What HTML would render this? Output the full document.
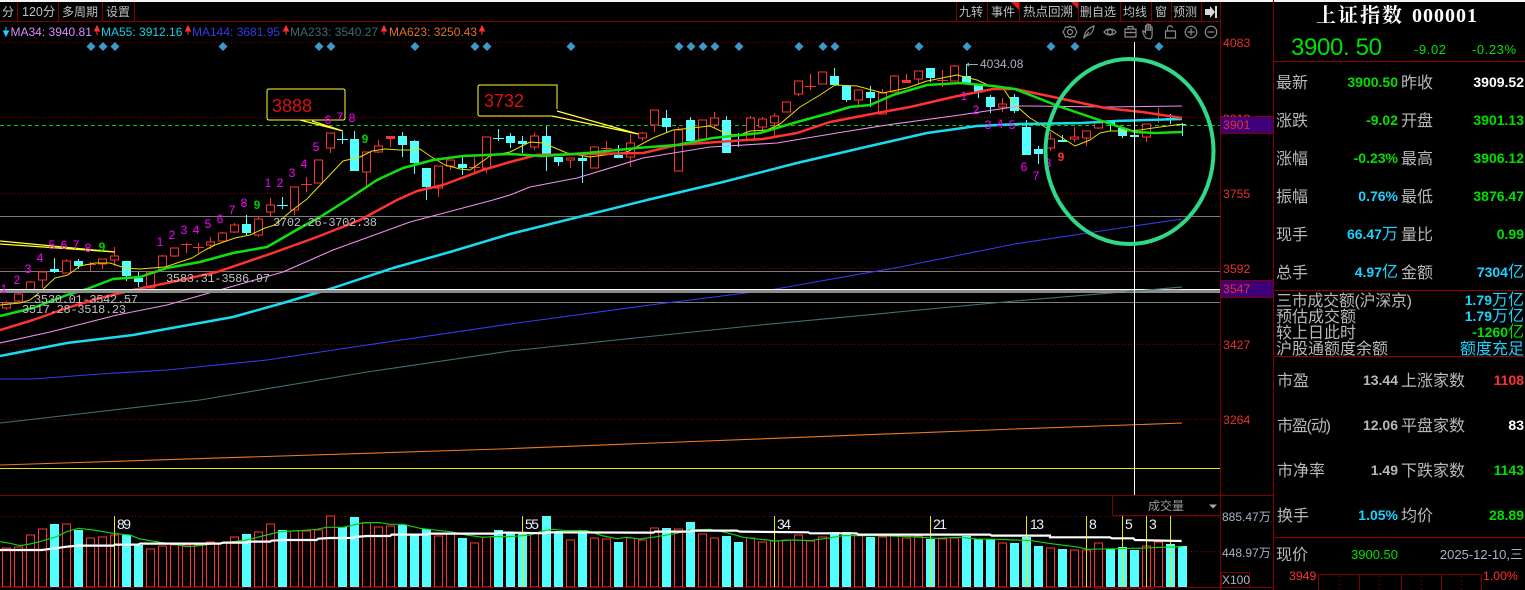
<!DOCTYPE html>
<html><head><meta charset="utf-8"><title>上证指数 000001</title>
<style>
html,body{margin:0;padding:0;background:#000;width:1525px;height:590px;overflow:hidden}
svg{display:block;position:absolute;left:0;top:0}
text{font-family:"Liberation Sans","WenQuanYi Zen Hei","Noto Sans CJK SC",sans-serif;white-space:pre}
.tb{font-size:12px;fill:#c0c0c0}
.lab{font-size:16px;fill:#b8b8b8}
.v{font-size:14px;font-weight:bold;text-anchor:end}
.v tspan{font-size:16px;font-weight:normal}
.g{fill:#00e000}.c{fill:#19d4ff}.w{fill:#fff}.gr{fill:#b8b8b8}.r{fill:#ff3030}
.ax{font-size:12.3px;fill:#e83030}
.n{font-size:12px;fill:#f0f}
.pr{font-family:"Liberation Mono",monospace;font-size:12px;fill:#c0c0c0}
.vn{font-size:14px;fill:#e8f0ff}
.ma{font-size:12px}
.ic{fill:none;stroke:#8a8a8a;stroke-width:1.2}
.d{fill:#3a9ac8}
</style></head><body>
<svg width="1525" height="590" viewBox="0 0 1525 590" xmlns="http://www.w3.org/2000/svg">
<rect width="1525" height="590" fill="#000"/>
<rect width="1525" height="2" fill="#f4f4f4"/>

<!-- toolbar -->
<g stroke="#800000" stroke-width="1" shape-rendering="crispEdges">
<path d="M0 21.5H1220M17.5 2V21M58.5 2V21M102.5 2V21M134.5 2V21M956.5 2V21M987.5 2V21M1019.5 2V21M1078.5 2V21M1120.5 2V21M1151.5 2V21M1171.5 2V21M1201.5 2V21"/>
</g>
<path d="M1011 2h8v8zM1071 2h7v7z" fill="#e02020"/>
<g class="tb">
<text class="tb" x="2" y="16">分</text>
<text class="tb" x="22" y="16" style="font-size:12.5px">120分</text>
<text class="tb" x="62" y="16">多周期</text>
<text class="tb" x="106" y="16">设置</text>
<text class="tb" x="959" y="16">九转</text>
<text class="tb" x="991" y="16">事件</text>
<text class="tb" x="1023" y="16" style="font-size:12.5px">热点回溯</text>
<text class="tb" x="1080" y="16">删自选</text>
<text class="tb" x="1123" y="16">均线</text>
<text class="tb" x="1155" y="16">窗</text>
<text class="tb" x="1173" y="16">预测</text>
</g>
<path d="M1205 9h5V6l5 6-5 6v-3h-5z" fill="#d8d8d8"/><rect x="1215" y="6" width="2" height="12" fill="#d8d8d8"/>

<!-- MA legend -->
<path d="M6 27v6M3.5 31L6 36 8.500 31z" stroke="#19d4ff" fill="#19d4ff"/>
<text class="ma" x="10.500" y="36" fill="#d88cff">MA34: 3940.81</text>
<path d="M97 35v-6M94.500 31L97 26 99.500 31z" stroke="#ff3030" fill="#ff3030"/>
<text class="ma" x="101" y="36" fill="#16d0e0">MA55: 3912.16</text>
<path d="M188 35v-6M185.500 31L188 26 190.500 31z" stroke="#ff3030" fill="#ff3030"/>
<text class="ma" x="192" y="36" fill="#3838e8">MA144: 3681.95</text>
<path d="M286 35v-6M283.500 31L286 26 288.500 31z" stroke="#ff3030" fill="#ff3030"/>
<text class="ma" x="290" y="36" fill="#3c6a70">MA233: 3540.27</text>
<path d="M384 35v-6M381.500 31L384 26 386.500 31z" stroke="#ff3030" fill="#ff3030"/>
<text class="ma" x="389" y="36" fill="#e07020">MA623: 3250.43</text>
<path d="M482 35v-6M479.500 31L482 26 484.500 31z" stroke="#ff3030" fill="#ff3030"/>

<!-- tool icons -->
<g class="ic">
<circle cx="1070" cy="32" r="2.500"/><path d="M1070 26l2 1.500 2.500-.5 1 2.500 1.500 2.500-1.500 2.500-1 2.500-2.500-.5-2 1.500-2-1.500-2.500.5-1-2.500-1.500-2.500 1.500-2.500 1-2.500 2.500.5z"/>
<path d="M1084 38c0-5 4-10 10-12-.5 5-3 9-8 10zM1084 38l5-6"/>
<path d="M1104 32c3-4 9-4 12 0-3 4-9 4-12 0z"/><circle cx="1110" cy="32" r="2.500"/>
<path d="M1125 29h11v8h-11zM1128 29v-2.500h5V29M1125 32.500h11M1130.500 31.500v2"/>
<path d="M1146 38c-2-2-3-5-3.500-7 .8-.8 1.800 0 3 2v-7c.8-1 1.500 0 1.500 0v5-6.500c.8-1 1.800 0 1.800 0v6.500-6c.8-1 1.700 0 1.700 0v6-4c.8-.8 1.600 0 1.600 0v8c0 2-.6 3-1.500 4z"/>
<path d="M1165.500 31h10v7h-10zM1167.500 31v-3c0-3 5-3 5 0"/>
<circle cx="1191" cy="32" r="5.800"/><path d="M1187.500 32h7M1191 28.500v7"/>
<circle cx="1211" cy="32" r="5.800"/><path d="M1207.500 32h7"/>
</g>

<!-- grid -->
<g stroke="#800000" stroke-width="1" stroke-dasharray="1 2" shape-rendering="crispEdges" fill="none">
<path d="M0 42.500H1220M0 117.500H1220M0 193.500H1220M0 268.500H1220M0 344.500H1220M0 419.500H1220M0 516.500H1220M0 551.500H1220"/>
</g>
<path d="M0 125.500H1221" stroke="#10c010" stroke-dasharray="4 3" shape-rendering="crispEdges"/>
<path d="M0 216.500H1220M0 271.500H1220M0 302.500H1220" stroke="#7c7c7c" shape-rendering="crispEdges"/>

<!-- diamonds -->
<g class="d">
<path d="M91 42l4.500 4.500L91 51l-4.500-4.500zM103 42l4.500 4.500L103 51l-4.500-4.500zM115 42l4.500 4.500L115 51l-4.500-4.500zM223 42l4.500 4.500L223 51l-4.500-4.500zM319 42l4.500 4.500L319 51l-4.500-4.500zM331 42l4.500 4.500L331 51l-4.500-4.500zM415 42l4.500 4.500L415 51l-4.500-4.500zM475 42l4.500 4.500L475 51l-4.500-4.500zM487 42l4.500 4.500L487 51l-4.500-4.500zM571 42l4.500 4.500L571 51l-4.500-4.500zM679 42l4.500 4.500L679 51l-4.500-4.500zM691 42l4.500 4.500L691 51l-4.500-4.500zM703 42l4.500 4.500L703 51l-4.500-4.500zM715 42l4.500 4.500L715 51l-4.500-4.500zM739 42l4.500 4.500L739 51l-4.500-4.500zM799 42l4.500 4.500L799 51l-4.500-4.500zM823 42l4.500 4.500L823 51l-4.500-4.500zM835 42l4.500 4.500L835 51l-4.500-4.500zM919 42l4.500 4.500L919 51l-4.500-4.500zM967 42l4.500 4.500L967 51l-4.500-4.500zM1051 42l4.500 4.500L1051 51l-4.500-4.500zM1075 42l4.500 4.500L1075 51l-4.500-4.500zM1159 42l4.500 4.500L1159 51l-4.500-4.500z"/>
</g>

<!-- red wicks + crosses -->
<path shape-rendering="crispEdges" stroke="#ff3232" fill="none" d="M6.500 301V310M18.500 293V303M30.500 281V291M42.500 271V288M66.500 259V273M90.500 262V271M85 264.500H96M102.500 259V269M114.500 247V266M150.500 271V288M162.500 255V270M174.500 248V257M186.500 243V253M181 244.500H192M198.500 243V253M193 247.500H204M210.500 237V249M222.500 232V241M234.500 223V233M258.500 216V237M270.500 198V217M294.500 187V215M306.500 177V192M301 184.500H312M318.500 160V183M330.500 133V153M366.500 152V187M378.500 140V153M390.500 136V147M474.500 157V173M469 167.500H480M438.500 166V197M450.500 160V170M486.500 137V173M534.500 133V150M570.500 158V168M594.500 147V168M606.500 141V153M601 148.500H612M630.500 134V167M642.500 132V141M654.500 110V132M678.500 127V171M702.500 120V139M714.500 112V128M750.500 116V139M762.500 117V132M774.500 113V136M786.500 102V112M798.500 81V96M810.500 74V90M805 86.500H816M822.500 72V84M858.500 90V106M882.500 89V114M894.500 75V92M906.500 74V81M918.500 71V84M942.500 70V87M937 80.500H948M954.500 65V81M1002.500 98V112M1050.500 132V151M1074.500 127V142M1086.500 131V146M1098.500 120V129M1146.500 124V142M1158.500 108V123M1153 119.500H1164"/>
<path fill="#ff3232" shape-rendering="crispEdges" d="M386 136h9v3h-9zM902 80h9v3h-9z"/>
<!-- red bodies -->
<path shape-rendering="crispEdges" stroke="#ff3232" fill="#000" d="M2.500 303h8v5h-8zM14.500 294h8v7h-8zM26.500 282h8v8h-8zM38.500 272h8v8h-8zM62.500 261h8v12h-8zM98.500 259h8v5h-8zM110.500 256h8v4h-8zM146.500 272h8v16h-8zM158.500 256h8v13h-8zM170.500 248h8v8h-8zM206.500 242h8v3h-8zM218.500 233h8v8h-8zM230.500 225h8v7h-8zM254.500 219h8v16h-8zM266.500 205h8v7h-8zM290.500 187h8v23h-8zM314.500 160h8v23h-8zM326.500 133h8v15h-8zM362.500 152h8v20h-8zM374.500 146h8v6h-8zM434.500 166h8v22h-8zM446.500 160h8v6h-8zM482.500 137h8v31h-8zM530.500 136h8v11h-8zM566.500 158h8v2h-8zM590.500 147h8v21h-8zM626.500 143h8v14h-8zM638.500 133h8v5h-8zM650.500 110h8v15h-8zM674.500 130h8v41h-8zM698.500 120h8v19h-8zM710.500 118h8v7h-8zM746.500 118h8v21h-8zM758.500 119h8v8h-8zM770.500 116h8v7h-8zM782.500 102h8v10h-8zM794.500 81h8v13h-8zM818.500 72h8v12h-8zM854.500 90h8v10h-8zM878.500 93h8v21h-8zM890.500 76h8v16h-8zM914.500 71h8v8h-8zM950.500 66h8v15h-8zM998.500 104h8v3h-8zM1046.500 139h8v9h-8zM1070.500 137h8v2h-8zM1082.500 131h8v7h-8zM1094.500 123h8v5h-8zM1142.500 124h8v13h-8z"/>
<!-- cyan wicks -->
<path shape-rendering="crispEdges" stroke="#54ffff" fill="none" d="M54.500 258V273M78.500 259V269M126.500 261V281M138.500 272V287M246.500 215V235M282.500 197V209M277 205.500H288M342.500 132V144M337 139.500H348M354.500 131V171M402.500 132V157M414.500 140V174M426.500 168V200M462.500 157V175M498.500 129V141M493 138.500H504M510.500 133V148M522.500 136V153M546.500 126V171M558.500 157V166M582.500 155V183M618.500 145V158M666.500 110V132M690.500 117V143M726.500 116V153M738.500 133V147M834.500 68V85M846.500 86V102M870.500 86V107M930.500 68V82M966.500 64V83M978.500 85V98M990.500 95V113M1014.500 94V113M1026.500 120V155M1038.500 146V164M1062.500 135V142M1110.500 120V131M1122.500 128V138M1134.500 135V143M1170.500 114V124M1182.500 123V136M1177 124.500H1186"/>
<!-- cyan bodies -->
<path shape-rendering="crispEdges" fill="#54ffff" d="M50 269h9v3h-9zM74 261h9v5h-9zM122 261h9v15h-9zM134 278h9v4h-9zM242 224h9v9h-9zM350 139h9v32h-9zM398 136h9v9h-9zM410 141h9v22h-9zM422 168h9v19h-9zM458 164h9v4h-9zM506 136h9v7h-9zM518 141h9v3h-9zM542 136h9v18h-9zM554 157h9v5h-9zM578 158h9v3h-9zM614 155h9v3h-9zM662 118h9v9h-9zM686 120h9v21h-9zM722 120h9v33h-9zM734 134h9v2h-9zM830 76h9v9h-9zM842 86h9v14h-9zM866 92h9v6h-9zM926 68h9v10h-9zM962 76h9v7h-9zM974 85h9v7h-9zM986 97h9v10h-9zM1010 97h9v14h-9zM1022 127h9v28h-9zM1034 149h9v5h-9zM1058 140h9v2h-9zM1106 122h9v2h-9zM1118 128h9v8h-9zM1130 135h9v2h-9zM1166 118h9v2h-9z"/>

<!-- MAs -->
<g fill="none" stroke-linejoin="round">
<polyline stroke="#e8e000" stroke-width="1" points="0,305 20,303 30,300 40,292 55,278 68,275 80,266 95,263 110,263 125,268 140,269 152,268 165,267 180,262 192,258 205,250 215,245 235,238 250,235 265,228 275,225 290,212 307,199 343,161 360,157 372,151 385,149 400,150 414,150 420,149 430,156 445,165 460,169 470,170 490,156 500,154 510,152 530,142 543,143 567,153 590,157 627,152 653,138 673,130 710,126 723,132 737,136 750,131 767,130 780,124 800,107 820,95 835,85 857,86 883,93 907,88 927,81 957,75 977,80 990,86 1003,88 1013,103 1030,118 1050,130 1075,146 1090,140 1100,133 1110,131 1125,131 1140,130 1160,127 1183,124"/>
<polyline stroke="#f090f0" stroke-width="1.100" points="0,343 50,332 117,315 167,305 223,289 283,272 333,250 410,222 493,200 510,195 530,187 577,178 643,158 710,147 777,143 843,132 887,125 960,115 1020,106 1032,106 1105,107 1182,106"/>
<polyline stroke="#3838f0" stroke-width="1.100" points="0,379 33,379 100,374 167,370 267,360 367,345 510,324 650,305 770,290 900,267 1015,244 1134,226 1182,219"/>
<polyline stroke="#3c7074" stroke-width="1.100" points="0,423 200,400 367,372 510,351 760,325 1015,301 1182,287"/>
<polyline stroke="#f07820" stroke-width="1.100" points="0,465 500,449 1015,429 1182,423"/>
<polyline stroke="#18dcf0" stroke-width="2.500" points="0,356 67,343 133,335 233,317 283,303 333,288 393,268 450,252 510,234 647,200 723,182 797,163 870,146 927,133 977,126 1020,124 1082,123 1115,121 1182,119"/>
<polyline stroke="#ff3232" stroke-width="2.500" points="0,330 33,320 67,308 100,298 133,290 167,283 217,272 267,255 317,237 360,220 397,200 417,191 443,185 483,170 510,162 537,155 587,154 643,153 677,145 717,142 763,139 797,133 830,122 877,113 910,107 953,97 993,89 1015,89 1058,98 1105,108 1142,112 1182,118"/>
<polyline stroke="#10e010" stroke-width="2.500" points="0,316 33,308 67,295 87,289 113,279 140,277 167,268 200,262 233,253 267,247 300,228 320,217 347,200 377,180 403,168 433,160 463,156 510,154 543,156 587,153 637,148 677,145 713,138 760,133 797,122 830,113 850,107 870,105 893,95 927,85 960,83 993,86 1015,89 1058,106 1105,122 1135,132 1155,133 1182,132"/>
</g>
<path shape-rendering="crispEdges" d="M0 289.500H1220" stroke="#fff"/>
<rect x="0" y="290" width="1220" height="3" fill="#8c8c8c" shape-rendering="crispEdges"/>
<rect x="1150" y="289" width="30" height="1" fill="#d8d8d8"/>
<polyline stroke="#3c7074" fill="none" points="1125,292 1182,287"/>

<!-- yellow y line -->
<path shape-rendering="crispEdges" d="M0 468.500H1220" stroke="#e8e800"/>

<!-- callouts -->
<path d="M267 91q0-2 2-2h74q2 0 2 2v27q0 2-2 2H269q-2 0-2-2z" fill="none" stroke="#ffff30" stroke-width="1"/>
<polyline points="300,120 343,131 312,121" fill="none" stroke="#ffff30" stroke-width="1.300"/>
<text x="272" y="112" font-size="18" fill="#d81010">3888</text>
<path d="M478 87q0-2 2-2h77v24M478 87v27q0 2 2 2h72" fill="none" stroke="#ffff30"/>
<polyline points="557,111 638,134 552,116" fill="none" stroke="#ffff30" stroke-width="1.300"/>
<text x="484" y="107" font-size="18" fill="#d81010">3732</text>
<polyline points="0,241 115,252 0,244" fill="none" stroke="#ffff30" stroke-width="1.300"/>

<!-- nine-turn numbers -->
<g class="n" text-anchor="middle">
<text class="n" x="4" y="293" text-anchor="middle">1</text><text class="n" x="17" y="284" text-anchor="middle">2</text><text class="n" x="28" y="273" text-anchor="middle">3</text><text class="n" x="40" y="262" text-anchor="middle">4</text><text class="n" x="52" y="249" text-anchor="middle">5</text><text class="n" x="64" y="249" text-anchor="middle">6</text><text class="n" x="76" y="249" text-anchor="middle">7</text><text class="n" x="88" y="252" text-anchor="middle">8</text><text class="n" x="102" y="251" text-anchor="middle" style="fill:#00d000;font-weight:bold">9</text>
<text class="n" x="160" y="246" text-anchor="middle">1</text><text class="n" x="172" y="239" text-anchor="middle">2</text><text class="n" x="184" y="234" text-anchor="middle">3</text><text class="n" x="196" y="234" text-anchor="middle">4</text><text class="n" x="208" y="228" text-anchor="middle">5</text><text class="n" x="220" y="223" text-anchor="middle">6</text><text class="n" x="232" y="214" text-anchor="middle">7</text><text class="n" x="244" y="207" text-anchor="middle">8</text><text class="n" x="257" y="209" text-anchor="middle" style="fill:#00d000;font-weight:bold">9</text>
<text class="n" x="268" y="187" text-anchor="middle">1</text><text class="n" x="280" y="187" text-anchor="middle">2</text><text class="n" x="292" y="177" text-anchor="middle">3</text><text class="n" x="304" y="168" text-anchor="middle">4</text><text class="n" x="316" y="151" text-anchor="middle">5</text><text class="n" x="328" y="124" text-anchor="middle">6</text><text class="n" x="340" y="121" text-anchor="middle">7</text><text class="n" x="352" y="122" text-anchor="middle">8</text><text class="n" x="365" y="143" text-anchor="middle" style="fill:#00d000;font-weight:bold">9</text>
<text class="n" x="964" y="100" text-anchor="middle">1</text><text class="n" x="976" y="114" text-anchor="middle">2</text><text class="n" x="988" y="129" text-anchor="middle">3</text><text class="n" x="1000" y="128" text-anchor="middle">4</text><text class="n" x="1012" y="129" text-anchor="middle">5</text><text class="n" x="1024" y="171" text-anchor="middle">6</text><text class="n" x="1036" y="180" text-anchor="middle">7</text><text class="n" x="1048" y="167" text-anchor="middle">8</text><text class="n" x="1061" y="161" text-anchor="middle" style="fill:#ff3030;font-weight:bold">9</text>
</g>

<!-- price range labels -->
<text class="pr" x="273" y="226" textLength="104">3702.26-3702.38</text>
<text class="pr" x="166" y="282" textLength="104">3583.31-3586.97</text>
<text class="pr" x="34" y="303" textLength="104">3530.01-3542.57</text>
<text class="pr" x="22" y="313" textLength="104">3517.28-3518.23</text>

<!-- high marker -->
<path d="M968 64.500H978" stroke="#9aa8b8"/><path d="M966 64.500l3-2v4z" fill="#9aa8b8"/>
<text x="980" y="68" font-size="12" fill="#a8b4c4">4034.08</text>

<!-- crosshair + circle -->
<path shape-rendering="crispEdges" d="M1134.500 42V495" stroke="#fff"/>
<ellipse cx="1129.500" cy="151.500" rx="84" ry="92.500" fill="none" stroke="#30d888" stroke-width="4"/>

<!-- volume pane -->
<path shape-rendering="crispEdges" fill="#54ffff" d="M50 524h9v63h-9zM74 530h9v57h-9zM122 535h9v52h-9zM134 545h9v42h-9zM242 534h9v53h-9zM278 530h9v57h-9zM338 527h9v60h-9zM350 517h9v70h-9zM398 525h9v62h-9zM410 535h9v52h-9zM422 529h9v58h-9zM458 538h9v49h-9zM494 530h9v57h-9zM506 533h9v54h-9zM518 533h9v54h-9zM542 516h9v71h-9zM554 531h9v56h-9zM578 531h9v56h-9zM614 542h9v45h-9zM662 528h9v59h-9zM686 522h9v65h-9zM722 536h9v51h-9zM734 542h9v45h-9zM830 532h9v55h-9zM842 532h9v55h-9zM866 537h9v50h-9zM926 539h9v48h-9zM962 536h9v51h-9zM974 539h9v48h-9zM986 539h9v48h-9zM1010 543h9v44h-9zM1022 537h9v50h-9zM1034 546h9v41h-9zM1058 549h9v38h-9zM1106 549h9v38h-9zM1118 547h9v40h-9zM1130 550h9v37h-9zM1166 544h9v43h-9zM1178 546h9v41h-9z"/>
<path shape-rendering="crispEdges" fill="none" stroke="#ff3232" d="M2.500 548h8v39h-8zM14.500 547h8v40h-8zM26.500 535h8v52h-8zM38.500 529h8v58h-8zM62.500 524h8v63h-8zM86.500 538h8v49h-8zM98.500 537h8v50h-8zM110.500 535h8v52h-8zM146.500 549h8v38h-8zM158.500 546h8v41h-8zM170.500 545h8v42h-8zM182.500 545h8v42h-8zM194.500 545h8v42h-8zM206.500 542h8v45h-8zM218.500 543h8v44h-8zM230.500 537h8v50h-8zM254.500 532h8v55h-8zM266.500 524h8v63h-8zM290.500 531h8v56h-8zM302.500 531h8v56h-8zM314.500 530h8v57h-8zM326.500 516h8v71h-8zM362.500 523h8v64h-8zM374.500 527h8v60h-8zM386.500 526h8v61h-8zM434.500 536h8v51h-8zM446.500 533h8v54h-8zM470.500 543h8v44h-8zM482.500 537h8v50h-8zM530.500 533h8v54h-8zM566.500 540h8v47h-8zM590.500 538h8v49h-8zM602.500 539h8v48h-8zM626.500 538h8v49h-8zM638.500 540h8v47h-8zM650.500 528h8v59h-8zM674.500 529h8v58h-8zM698.500 534h8v53h-8zM710.500 538h8v49h-8zM746.500 538h8v49h-8zM758.500 542h8v45h-8zM770.500 541h8v46h-8zM782.500 540h8v47h-8zM794.500 535h8v52h-8zM806.500 541h8v46h-8zM818.500 537h8v50h-8zM854.500 535h8v52h-8zM878.500 537h8v50h-8zM890.500 536h8v51h-8zM902.500 538h8v49h-8zM914.500 536h8v51h-8zM938.500 539h8v48h-8zM950.500 538h8v49h-8zM998.500 543h8v44h-8zM1046.500 548h8v39h-8zM1070.500 550h8v37h-8zM1082.500 550h8v37h-8zM1094.500 543h8v44h-8zM1142.500 546h8v41h-8zM1154.500 542h8v45h-8z"/>

<path shape-rendering="crispEdges" stroke="#e8e800" fill="none" d="M114.500 516V587M522.500 516V587M774.500 516V587M930.500 516V587M1026.500 516V587M1086.500 516V587M1122.500 516V587M1146.500 516V587M1170.500 516V587"/>

<g fill="none">
<polyline transform="scale(.33333) translate(0,1470)" vector-effect="non-scaling-stroke" stroke="#10d010" stroke-width="1.200" points="0,155 30,160 60,167 90,162 130,152 170,140 200,125 235,115 280,120 340,130 390,135 420,147 480,157 520,162 560,170 600,167 650,160 700,155 740,150 800,135 840,125 900,122 950,118 980,112 1030,112 1090,98 1140,98 1170,103 1210,103 1260,115 1350,125 1400,135 1450,142 1480,140 1530,140 1590,135 1630,122 1660,118 1700,122 1760,122 1810,138 1850,146 1880,142 1920,147 1970,140 2030,130 2070,120 2130,118 2180,128 2230,142 2280,148 2330,153 2380,150 2430,152 2480,145 2530,137 2630,137 2730,140 2810,145 2880,142 2930,147 2990,148 3045,150 3095,152 3145,160 3225,170 3265,178 3405,175 3545,170"/>
<polyline transform="scale(.33333) translate(0,1470)" vector-effect="non-scaling-stroke" stroke="#fff" stroke-width="2.200" points="0,180 125,180 165,175 200,170 235,167 340,167 345,164 415,164 420,161 660,161 670,158 740,158 745,155 810,155 815,152 850,150 950,150 955,146 990,144 1060,144 1065,141 1100,138 1170,138 1175,134 1280,134 1285,131 1490,131 1495,128 1530,128 1635,130 1640,127 1960,128 1965,125 2070,125 2075,122 2210,122 2220,125 2425,127 2430,130 2570,130 2575,134 2970,134 2975,137 3150,137 3150,142 3330,142 3335,145 3400,145 3405,150 3545,153"/>
</g>

<g class="vn">
<text class="vn" x="117" y="529" textLength="14">89</text>
<text class="vn" x="525" y="529" textLength="14">55</text>
<text class="vn" x="777" y="529" textLength="14">34</text>
<text class="vn" x="933" y="529" textLength="14">21</text>
<text class="vn" x="1030" y="529" textLength="14">13</text>
<text class="vn" x="1089" y="529">8</text>
<text class="vn" x="1125" y="529">5</text>
<text class="vn" x="1149" y="529">3</text>
</g>

<!-- structural lines -->
<g stroke="#800000" stroke-width="1" shape-rendering="crispEdges" fill="none">
<path d="M0 495.500H1273M0 587.500H1273M1220.500 2V590M1273.500 0V590M1112.500 495V515M1112.500 515.500H1220"/>
<path d="M1221 116.500H1273M1221 133.500H1273M1221 280.500H1273M1221 297.500H1273"/>
<path d="M1273 61.500H1525M1273 290.500H1525M1273 356.500H1525M1273 537.500H1525" stroke="#900000"/>
<rect x="1221.500" y="572.500" width="28" height="15"/>
<path d="M1094 588.500H1154"/>
</g>
<text x="1148" y="510" font-size="12" fill="#9a9a9a">成交量</text>
<path d="M1209 504.500h8l-4 4z" fill="#a8a8a8"/>

<!-- axis -->
<text class="ax" x="1223" y="123">3918</text>
<rect x="1221" y="117" width="52" height="16" fill="#3d007a"/>
<rect x="1221" y="281" width="52" height="16" fill="#3d007a"/>
<text class="ax" x="1223" y="47">4083</text>
<text class="ax" x="1223" y="129">3901</text>
<text class="ax" x="1223" y="198">3755</text>
<text class="ax" x="1223" y="273">3592</text>
<text class="ax" x="1223" y="293">3547</text>
<text class="ax" x="1223" y="349">3427</text>
<text class="ax" x="1223" y="424">3264</text>
<text x="1222" y="521" font-size="12" fill="#a8b4c4">885.47万</text>
<text x="1222" y="557" font-size="12" fill="#a8b4c4">448.97万</text>
<text x="1222" y="584" font-size="12" fill="#a8b4c4">X100</text>

<!-- right panel -->
<text x="1316" y="22" fill="#fff" font-size="20" font-weight="bold" letter-spacing="2" style="font-family:'Noto Serif CJK SC',serif">上证指数</text>
<text x="1412" y="22" fill="#fff" font-size="20" font-weight="bold" textLength="65" style="font-family:'Liberation Serif',serif">000001</text>
<text x="1291" y="55" class="g" font-size="24" textLength="91">3900. 50</text>
<text x="1414" y="54" class="g" font-size="13" textLength="32">-9.02</text>
<text x="1472" y="54" class="g" font-size="13" textLength="44">-0.23%</text>

<text class="lab" x="1276" y="88">最新</text><text class="v g" x="1398" y="87">3900.50</text><text class="lab" x="1401" y="88">昨收</text><text class="v w" x="1524" y="87">3909.52</text>
<text class="lab" x="1276" y="126">涨跌</text><text class="v g" x="1398" y="125">-9.02</text><text class="lab" x="1401" y="126">开盘</text><text class="v g" x="1524" y="125">3901.13</text>
<text class="lab" x="1276" y="164">涨幅</text><text class="v g" x="1398" y="163">-0.23%</text><text class="lab" x="1401" y="164">最高</text><text class="v g" x="1524" y="163">3906.12</text>
<text class="lab" x="1276" y="202">振幅</text><text class="v c" x="1398" y="201">0.76%</text><text class="lab" x="1401" y="202">最低</text><text class="v g" x="1524" y="201">3876.47</text>
<text class="lab" x="1276" y="240">现手</text><text class="v c" x="1398" y="239">66.47<tspan>万</tspan></text><text class="lab" x="1401" y="240">量比</text><text class="v g" x="1524" y="239">0.99</text>
<text class="lab" x="1276" y="278">总手</text><text class="v c" x="1398" y="277">4.97<tspan>亿</tspan></text><text class="lab" x="1401" y="278">金额</text><text class="v c" x="1524" y="277">7304<tspan>亿</tspan></text>

<text class="lab" x="1276" y="306" textLength="136">三市成交额(沪深京)</text><text class="v c" x="1524" y="305">1.79<tspan>万亿</tspan></text>
<text class="lab" x="1276" y="322">预估成交额</text><text class="v c" x="1524" y="321">1.79<tspan>万亿</tspan></text>
<text class="lab" x="1276" y="338">较上日此时</text><text class="v g" x="1524" y="337">-1260<tspan>亿</tspan></text>
<text class="lab" x="1276" y="354">沪股通额度余额</text><text class="c" x="1524" y="354" font-size="16" text-anchor="end">额度充足</text>

<text class="lab" x="1277" y="386">市盈</text><text class="v gr" x="1398" y="385">13.44</text><text class="lab" x="1401" y="386">上涨家数</text><text class="v r" x="1524" y="385">1108</text>
<text class="lab" x="1277" y="431" textLength="54">市盈(动)</text><text class="v gr" x="1398" y="430">12.06</text><text class="lab" x="1401" y="431">平盘家数</text><text class="v w" x="1524" y="430">83</text>
<text class="lab" x="1277" y="476">市净率</text><text class="v gr" x="1398" y="475">1.49</text><text class="lab" x="1401" y="476">下跌家数</text><text class="v g" x="1524" y="475">1143</text>
<text class="lab" x="1277" y="521">换手</text><text class="v c" x="1398" y="520">1.05%</text><text class="lab" x="1401" y="521">均价</text><text class="v g" x="1524" y="520">28.89</text>

<text class="lab" x="1276" y="560">现价</text>
<text x="1398" y="559" class="g" font-size="13" text-anchor="end">3900.50</text>
<text x="1523" y="559" fill="#a8b4c4" font-size="13" text-anchor="end">2025-12-10,三</text>
<text x="1289" y="580" class="r" font-size="12.300">3949</text>
<text x="1483" y="580" class="r" font-size="12.300">1.00%</text>
<path shape-rendering="crispEdges" fill="none" stroke="#800000" d="M1318.500 590V574.500H1481.500V590M1359.500 574V590M1401.500 574V590M1441.500 574V590"/>
<path shape-rendering="crispEdges" stroke="#800000" stroke-dasharray="1 3" d="M1339.500 576V590M1379.500 576V590M1421.500 576V590M1461.500 576V590"/>
</svg>
</body></html>
